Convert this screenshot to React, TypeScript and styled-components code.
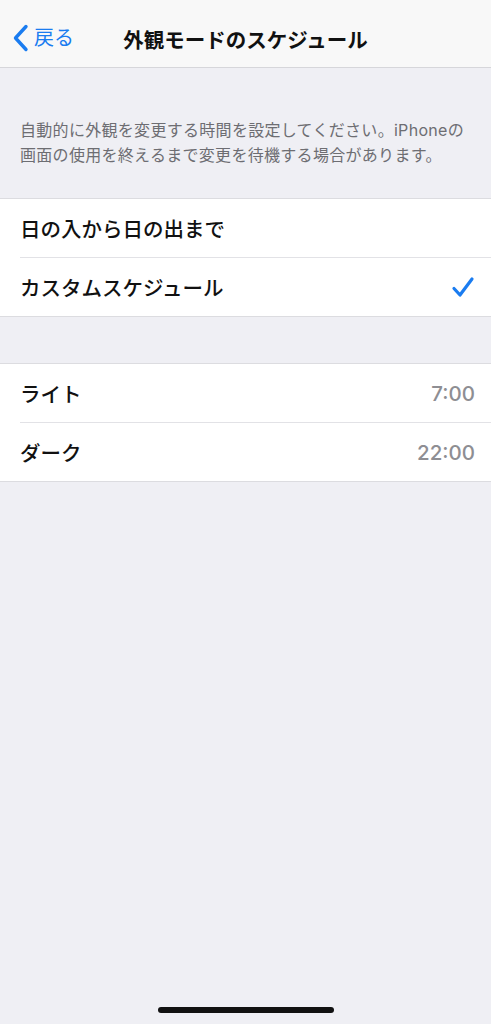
import React from "react"
import styled, { createGlobalStyle } from "styled-components"

const GlobalStyle = createGlobalStyle`
  html, body {
    margin: 0;
    padding: 0;
    background: #efeff4;
  }
  body {
    font-family: Inter, "Noto Sans CJK JP", sans-serif;
    -webkit-font-smoothing: antialiased;
  }
`

const options = [
  { label: "日の入から日の出まで", checked: false },
  { label: "カスタムスケジュール", checked: true },
]

const times = [
  { label: "ライト", value: "7:00" },
  { label: "ダーク", value: "22:00" },
]

const App = () => {
  return (
    <Screen>
      <GlobalStyle />
      <NavBar>
        <BackButton>
          <svg width="17" height="28" viewBox="0 0 17 28">
            <path
              d="M14 2.5 L3.5 14 L14 25.5"
              fill="none"
              stroke="#1a7cf0"
              strokeWidth="3.4"
              strokeLinecap="round"
              strokeLinejoin="round"
            />
          </svg>
          <BackLabel>戻る</BackLabel>
        </BackButton>
        <Title>外観モードのスケジュール</Title>
      </NavBar>

      <Footnote>
        自動的に外観を変更する時間を設定してください。iPhoneの
        <br />
        画面の使用を終えるまで変更を待機する場合があります。
      </Footnote>

      <Group>
        {options.map((option, i) => (
          <Row key={option.label} $last={i === options.length - 1}>
            <RowLabel>{option.label}</RowLabel>
            {option.checked && (
              <svg width="24" height="22" viewBox="0 0 24 22">
                <path
                  d="M3 12.5 L9 19 L21 3"
                  fill="none"
                  stroke="#1a7cf0"
                  strokeWidth="3.2"
                  strokeLinecap="round"
                  strokeLinejoin="round"
                />
              </svg>
            )}
          </Row>
        ))}
      </Group>

      <Spacer />

      <Group>
        {times.map((time, i) => (
          <Row key={time.label} $last={i === times.length - 1}>
            <RowLabel>{time.label}</RowLabel>
            <RowValue>{time.value}</RowValue>
          </Row>
        ))}
      </Group>

      <HomeBar>
        <HomeIndicator />
      </HomeBar>
    </Screen>
  )
}

export default App

const Screen = styled.div`
  width: 491px;
  height: 1024px;
  background: #efeff4;
  display: flex;
  flex-direction: column;
  overflow: hidden;
`
const NavBar = styled.div`
  height: 67px;
  background: #f8f8f8;
  border-bottom: 1px solid #d6d6da;
  display: flex;
  align-items: center;
  justify-content: center;
  position: relative;
  flex-shrink: 0;
`
const BackButton = styled.div`
  position: absolute;
  left: 12px;
  top: 24px;
  display: flex;
  align-items: center;
  gap: 5px;
`
const BackLabel = styled.span`
  color: #1a7cf0;
  font-size: 20px;
  line-height: 28px;
`
const Title = styled.div`
  font-size: 20.5px;
  font-weight: 700;
  color: #111;
  margin-top: 10px;
`
const Footnote = styled.div`
  padding: 50px 20px 30px;
  font-size: 16px;
  line-height: 25px;
  color: #6d6d72;
  letter-spacing: 0.3px;
`
const Group = styled.div`
  background: #fff;
  border-top: 1px solid #dcdce0;
  border-bottom: 1px solid #dcdce0;
`
const Row = styled.div<{ $last: boolean }>`
  height: 58px;
  margin-left: 20px;
  padding-right: 16px;
  display: flex;
  align-items: center;
  justify-content: space-between;
  border-bottom: ${props => (props.$last ? "none" : "1px solid #e2e2e6")};
`
const RowLabel = styled.span`
  font-size: 20.5px;
  font-weight: 500;
  color: #111;
`
const RowValue = styled.span`
  font-size: 20.5px;
  font-weight: 500;
  color: #8e8e93;
`
const Spacer = styled.div`
  height: 46px;
`
const HomeBar = styled.div`
  margin-top: auto;
  height: 24px;
  padding-top: 7px;
  box-sizing: border-box;
  display: flex;
  justify-content: center;
`
const HomeIndicator = styled.div`
  width: 176px;
  height: 6px;
  border-radius: 3px;
  background: #111;
`
